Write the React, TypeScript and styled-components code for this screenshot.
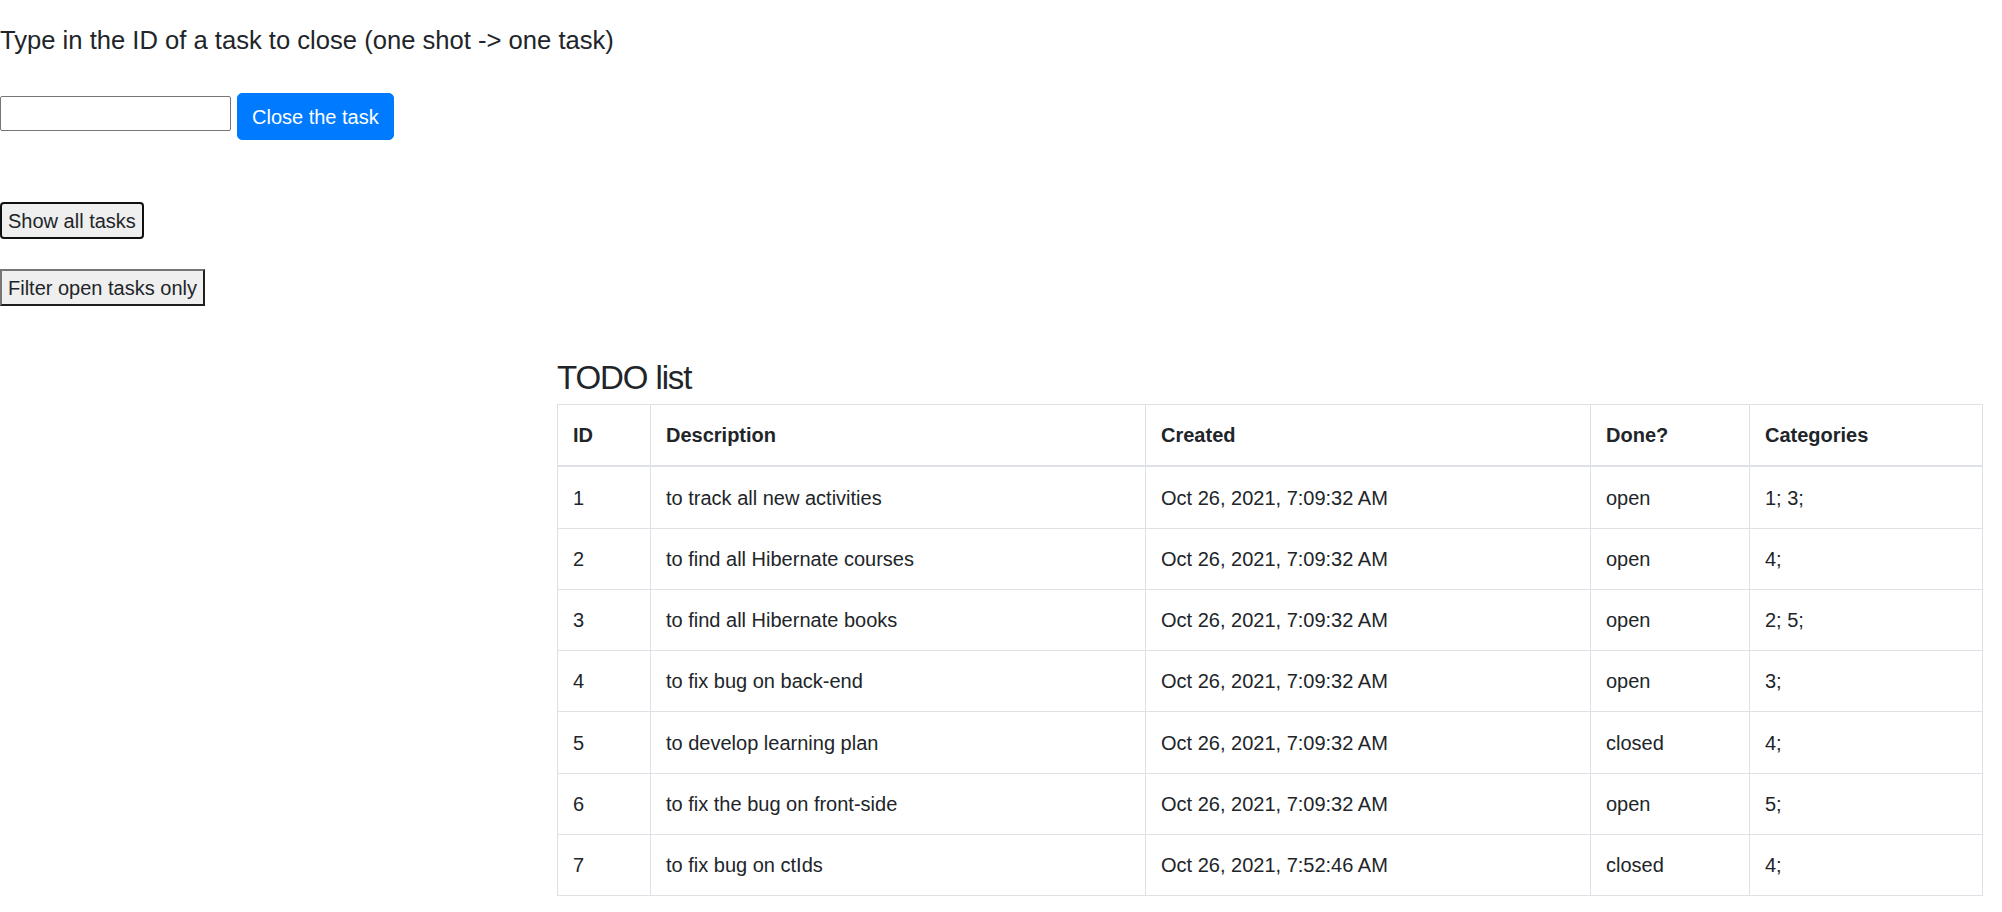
import React from "react";
import styled, { createGlobalStyle } from "styled-components";

const GlobalStyle = createGlobalStyle`
  html, body {
    margin: 0;
    padding: 0;
    background: #ffffff;
  }
  body {
    font-family: "Liberation Sans", Arial, sans-serif;
    font-size: 20px;
    line-height: 30px;
    color: #212529;
  }
  *, *::before, *::after { box-sizing: border-box; }
`;

const Page = styled.main`
  display: flex;
  flex-direction: column;
  align-items: flex-start;
`;

const Controls = styled.section`
  display: flex;
  flex-direction: column;
  align-items: flex-start;
  padding-top: 25px;
`;

const Prompt = styled.h5`
  margin: 0;
  font-size: 25.6px;
  line-height: 30px;
  font-weight: 500;
  color: #212529;
`;

const CloseRow = styled.div`
  display: flex;
  align-items: flex-start;
  gap: 6px;
  margin-top: 38px;
`;

const IdInput = styled.input`
  width: 231px;
  height: 35px;
  margin: 3px 0 0;
  padding: 1px 3px;
  border: 1px solid #767676;
  border-radius: 2px;
  font: inherit;
  background: #fff;
`;

const PrimaryButton = styled.button`
  height: 47px;
  padding: 0 14px;
  border: 1px solid #007bff;
  border-radius: 5px;
  background: #007bff;
  color: #ffffff;
  font-family: inherit;
  font-size: 20px;
  line-height: 30px;
  cursor: pointer;
`;

const PlainButton = styled.button<{ $focused?: boolean; $top: number }>`
  margin-top: ${(p) => p.$top}px;
  height: 37px;
  padding: 0 6px;
  background: #efefef;
  color: #212529;
  font-family: inherit;
  font-size: 20px;
  line-height: 30px;
  border-style: solid;
  border-width: 2px;
  border-color: ${(p) => (p.$focused ? "#101010" : "#767676 #1f1f1f #1f1f1f #767676")};
  border-radius: ${(p) => (p.$focused ? "4px" : "0")};
  cursor: pointer;
`;

const ListSection = styled.section`
  margin: 52px 0 0 557px;
  width: 1425px;
`;

const ListTitle = styled.h3`
  margin: 0 0 6px;
  font-size: 33px;
  line-height: 40px;
  letter-spacing: -1.1px;
  font-weight: 500;
  color: #212529;
`;

const Table = styled.table`
  width: 1425px;
  border-collapse: collapse;
  table-layout: fixed;
  border: 1px solid #dee2e6;
`;

const HeadCell = styled.th<{ $w: number }>`
  width: ${(p) => p.$w}px;
  padding: 15.2px 15px;
  text-align: left;
  font-weight: bold;
  vertical-align: bottom;
  border: 1px solid #dee2e6;
  border-bottom: 2.5px solid #dee2e6;
  line-height: 30px;
`;

const Cell = styled.td`
  padding: 15.125px 15px;
  border: 1px solid #dee2e6;
  vertical-align: top;
  line-height: 30px;
`;

const columns = [
  { label: "ID", w: 93 },
  { label: "Description", w: 495 },
  { label: "Created", w: 445 },
  { label: "Done?", w: 159 },
  { label: "Categories", w: 233 },
];

const tasks = [
  { id: 1, desc: "to track all new activities", created: "Oct 26, 2021, 7:09:32 AM", done: "open", cats: "1; 3;" },
  { id: 2, desc: "to find all Hibernate courses", created: "Oct 26, 2021, 7:09:32 AM", done: "open", cats: "4;" },
  { id: 3, desc: "to find all Hibernate books", created: "Oct 26, 2021, 7:09:32 AM", done: "open", cats: "2; 5;" },
  { id: 4, desc: "to fix bug on back-end", created: "Oct 26, 2021, 7:09:32 AM", done: "open", cats: "3;" },
  { id: 5, desc: "to develop learning plan", created: "Oct 26, 2021, 7:09:32 AM", done: "closed", cats: "4;" },
  { id: 6, desc: "to fix the bug on front-side", created: "Oct 26, 2021, 7:09:32 AM", done: "open", cats: "5;" },
  { id: 7, desc: "to fix bug on ctIds", created: "Oct 26, 2021, 7:52:46 AM", done: "closed", cats: "4;" },
];

export default function App() {
  return (
    <>
      <GlobalStyle />
      <Page>
        <Controls>
          <Prompt>Type in the ID of a task to close (one shot -&gt; one task)</Prompt>
          <CloseRow>
            <IdInput type="text" />
            <PrimaryButton type="button">Close the task</PrimaryButton>
          </CloseRow>
          <PlainButton type="button" $top={62} $focused>
            Show all tasks
          </PlainButton>
          <PlainButton type="button" $top={30}>
            Filter open tasks only
          </PlainButton>
        </Controls>
        <ListSection>
          <ListTitle>TODO list</ListTitle>
          <Table>
            <thead>
              <tr>
                {columns.map((c) => (
                  <HeadCell key={c.label} $w={c.w}>
                    {c.label}
                  </HeadCell>
                ))}
              </tr>
            </thead>
            <tbody>
              {tasks.map((t) => (
                <tr key={t.id}>
                  <Cell>{t.id}</Cell>
                  <Cell>{t.desc}</Cell>
                  <Cell>{t.created}</Cell>
                  <Cell>{t.done}</Cell>
                  <Cell>{t.cats}</Cell>
                </tr>
              ))}
            </tbody>
          </Table>
        </ListSection>
      </Page>
    </>
  );
}
